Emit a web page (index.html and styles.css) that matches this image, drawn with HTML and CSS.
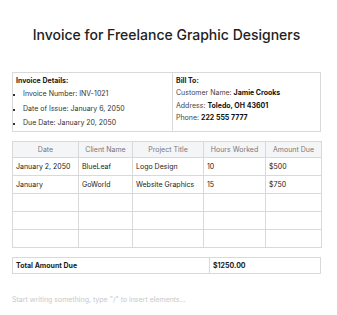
FILE: index.html
```html
<!DOCTYPE html>
<html>
<head>
<meta charset="utf-8">
<link rel="stylesheet" href="styles.css">
</head>
<body>
<div class="page">
  <h1 class="title">Invoice for Freelance Graphic Designers</h1>
  <table class="info">
    <tr>
      <td class="info-left">
        <div class="label">Invoice Details:</div>
        <ul class="details">
          <li>Invoice Number: INV-1021</li>
          <li>Date of Issue: January 6, 2050</li>
          <li>Due Date: January 20, 2050</li>
        </ul>
      </td>
      <td class="info-right">
        <div class="label">Bill To:</div>
        <div class="line">Customer Name: <b>Jamie Crooks</b></div>
        <div class="line">Address: <b>Toledo, OH 43601</b></div>
        <div class="line">Phone: <b>222 555 7777</b></div>
      </td>
    </tr>
  </table>
  <table class="items">
    <colgroup>
      <col class="c1"><col class="c2"><col class="c3"><col class="c4"><col class="c5">
    </colgroup>
    <tr class="head">
      <th>Date</th><th>Client Name</th><th>Project Title</th><th>Hours Worked</th><th>Amount Due</th>
    </tr>
    <tr class="row">
      <td>January 2, 2050</td><td>BlueLeaf</td><td>Logo Design</td><td>10</td><td>$500</td>
    </tr>
    <tr class="row">
      <td>January</td><td>GoWorld</td><td>Website Graphics</td><td>15</td><td>$750</td>
    </tr>
    <tr class="row empty"><td></td><td></td><td></td><td></td><td></td></tr>
    <tr class="row empty"><td></td><td></td><td></td><td></td><td></td></tr>
    <tr class="row empty"><td></td><td></td><td></td><td></td><td></td></tr>
  </table>
  <table class="total">
    <tr>
      <td class="t-label">Total Amount Due</td>
      <td class="t-value">$1250.00</td>
    </tr>
  </table>
  <p class="placeholder">Start writing something, type "/" to insert elements...</p>
</div>
</body>
</html>
```

FILE: styles.css
```css
* { box-sizing: border-box; }
html, body { margin: 0; padding: 0; background: #ffffff; }
body {
  font-family: Inter, "Noto Sans", "Liberation Sans", sans-serif;
  color: #1f1f1f;
}
.page {
  width: 337px;
  padding: 0 16px 0 12px;
}
.title {
  margin: 0;
  padding-top: 26px;
  height: 72px;
  font-size: 14px;
  line-height: 18px;
  font-weight: 500;
  text-align: center;
  color: #222222;
}
table {
  border-collapse: collapse;
  width: 309px;
  table-layout: fixed;
}
td, th {
  border: 1px solid #d9d9d9;
  font-size: 7px;
  padding: 0 3px;
}
.info td {
  vertical-align: top;
  height: 59px;
  padding-top: 1px;
}
.info-left { width: 160px; }
.label {
  font-weight: 700;
  line-height: 13px;
  color: #1a1a1a;
}
.details {
  margin: 0;
  padding-left: 7px;
  list-style: square;
}
.details li {
  line-height: 14.5px;
  color: #333333;
}
.details li::marker { font-size: 5px; }
.info-right .label { line-height: 13px; }
.info-right .line {
  line-height: 12.5px;
  color: #444444;
}
.info-right b { color: #111111; font-weight: 700; }
.items { margin-top: 9px; }
.c1 { width: 66px; }
.c2 { width: 54px; }
.c3 { width: 71px; }
.c4 { width: 62px; }
.c5 { width: 56px; }
.head th {
  background: #f4f5f7;
  color: #777777;
  font-weight: 400;
  height: 16px;
  text-align: center;
}
.row td {
  height: 18px;
  color: #222222;
  padding-left: 3px;
}
.total { margin-top: 9px; }
.total td {
  height: 16px;
  font-weight: 700;
  color: #1a1a1a;
}
.t-label { width: 197px; }
.placeholder {
  margin: 21px 0 0 0;
  font-size: 7px;
  line-height: 10px;
  color: #c8c8c8;
}
```
